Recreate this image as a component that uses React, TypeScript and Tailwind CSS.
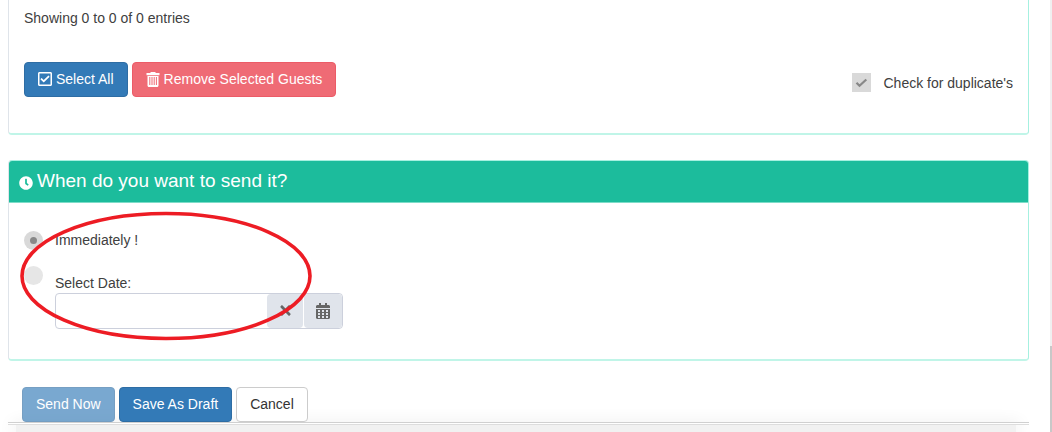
import { useState } from "react";
import type { ReactNode } from "react";
import { FaClock, FaRegCheckSquare, FaTimes } from "react-icons/fa";

interface ButtonProps {
  children: ReactNode;
  variant: "primary" | "danger" | "default";
  disabled?: boolean;
  onClick?: () => void;
}

function Button({ children, variant, disabled = false, onClick }: ButtonProps) {
  const getVariantStyles = () => {
    switch (variant) {
      case "primary":
        return "border-[#2e6da4] bg-[#337ab7] text-white";
      case "danger":
        return "border-[#ec5b67] bg-[#ef6b75] text-white";
      case "default":
        return "border-[#cccccc] bg-white text-[#333333]";
    }
  };

  return (
    <button
      type="button"
      disabled={disabled}
      onClick={onClick}
      className={`flex h-[35px] items-center gap-1 rounded border px-[13px] pb-px whitespace-nowrap disabled:opacity-65 ${getVariantStyles()}`}
    >
      {children}
    </button>
  );
}

function TrashIcon() {
  return (
    <svg viewBox="0 0 14 15" className="h-[15px] w-[14px]" fill="currentColor" aria-hidden="true">
      <path d="M4.500 1V0h5v1H13.500v2.200H.5V1z" />
      <path
        fillRule="evenodd"
        d="M1.500 4h11v9.500c0 .8-.6 1.500-1.500 1.500H3c-.9 0-1.500-.7-1.500-1.500zM3.300 5v8h1V5zM5.500 5v8h1V5zM7.700 5v8h1V5zM9.900 5v8h1V5z"
      />
    </svg>
  );
}

function CalendarIcon() {
  return (
    <svg viewBox="0 0 14 16" className="h-4 w-[14px]" aria-hidden="true">
      <path
        fill="currentColor"
        fillRule="evenodd"
        d="M3 0h2v2h4V0h2v2h1.500c.8 0 1.500.7 1.500 1.500V5H0V3.500C0 2.700.7 2 1.500 2H3zM0 6h14v8.500c0 .8-.7 1.500-1.500 1.500h-11C.7 16 0 15.300 0 14.500zM2 7v2h2V7zM6 7v2h2V7zM10 7v2h2V7zM2 10v2h2v-2zM6 10v2h2v-2zM10 10v2h2v-2zM2 13v2h2v-2zM6 13v2h2v-2zM10 13v2h2v-2z"
      />
    </svg>
  );
}

const radioStyles =
  "flex h-[19px] w-[19px] shrink-0 appearance-none items-center justify-center rounded-full bg-[#e6e6e6] checked:bg-[#d9d9d9] checked:before:h-[7px] checked:before:w-[7px] checked:before:rounded-full checked:before:bg-[#888888]";

export default function App() {
  const [checkDuplicates, setCheckDuplicates] = useState(true);
  const [sendMode, setSendMode] = useState("now");
  const [date, setDate] = useState("");

  return (
    <div className="flex min-h-screen bg-white font-['Liberation_Sans',Arial,sans-serif] text-sm leading-5 text-[#404040]">
      <div className="flex min-w-0 flex-1 flex-col">
        <main className="relative mr-[21px] ml-2 flex flex-col">
          {/* Guest list */}
          <section className="rounded-b border border-t-0 border-[#a6f0e0] border-b-2 border-b-[#c0f5e8] border-l-[#dfe4ea] px-[15px] pt-2 pb-9">
            <p>Showing 0 to 0 of 0 entries</p>
            <div className="mt-[34px] flex items-center justify-between">
              <div className="flex gap-1">
                <Button variant="primary">
                  <FaRegCheckSquare className="h-4 w-[14px]" />
                  Select All
                </Button>
                <Button variant="danger">
                  <TrashIcon />
                  Remove Selected Guests
                </Button>
              </div>
              <label className="flex items-center gap-3 pt-[6px]">
                <span className="relative flex h-[19px] w-[19px]">
                  <input
                    type="checkbox"
                    checked={checkDuplicates}
                    onChange={(e) => setCheckDuplicates(e.target.checked)}
                    className="peer h-full w-full appearance-none bg-[#d9d9d9]"
                  />
                  <svg
                    viewBox="0 0 19 19"
                    className="pointer-events-none invisible absolute inset-0 peer-checked:visible"
                    fill="none"
                    stroke="#888888"
                    strokeWidth="2.200"
                    aria-hidden="true"
                  >
                    <path d="M4.500 9.800l3 3 6.800-6.300" />
                  </svg>
                </span>
                Check for duplicate's
              </label>
            </div>
          </section>

          {/* Schedule */}
          <section className="mt-[25px] rounded border border-[#a6f0e0] border-b-2 border-b-[#c0f5e8] border-l-[#dfe4ea]">
            <h2 className="flex h-[42px] items-center gap-1 rounded-t-[3px] border-b border-[#7edcc8] bg-[#1cbc9c] px-[10px] pb-[2px] text-[19px] text-white">
              <FaClock className="mt-1 h-[14px] w-[14px]" />
              When do you want to send it?
            </h2>
            <div className="flex flex-col px-[15px] pt-[27px] pb-[30px]">
              <label className="flex items-center gap-3">
                <input
                  type="radio"
                  name="send-mode"
                  checked={sendMode === "now"}
                  onChange={() => setSendMode("now")}
                  className={radioStyles}
                />
                Immediately !
              </label>
              <div className="mt-4 flex gap-3">
                <input
                  type="radio"
                  name="send-mode"
                  aria-label="Select Date"
                  checked={sendMode === "date"}
                  onChange={() => setSendMode("date")}
                  className={radioStyles}
                />
                <div className="pt-2">
                  <label htmlFor="send-date" className="block leading-[19px]">
                    Select Date:
                  </label>
                  <div className="flex h-9 w-72 overflow-hidden rounded border border-[#ccd0dc]">
                    <input
                      id="send-date"
                      type="text"
                      value={date}
                      onChange={(e) => setDate(e.target.value)}
                      className="min-w-0 flex-1 px-3 outline-none"
                    />
                    <button
                      type="button"
                      aria-label="Clear date"
                      onClick={() => setDate("")}
                      className="flex w-9 items-center justify-center rounded bg-[#e0e4eb] pb-px text-[#666666]"
                    >
                      <FaTimes className="h-[15px] w-[15px]" />
                    </button>
                    <button
                      type="button"
                      aria-label="Open calendar"
                      className="ml-px flex w-[38px] items-center justify-center rounded bg-[#e0e4eb] pb-px text-[#666666]"
                    >
                      <CalendarIcon />
                    </button>
                  </div>
                </div>
              </div>
            </div>
          </section>

          {/* Hand-drawn highlight round the schedule options */}
          <svg
            viewBox="0 0 292 130"
            className="pointer-events-none absolute bottom-[84px] left-3 h-[130px] w-[292px]"
            fill="none"
            aria-hidden="true"
          >
            <ellipse cx="146" cy="65" rx="144" ry="62.500" stroke="#ed1c24" strokeWidth="3.600" />
          </svg>

          {/* Actions */}
          <div className="mt-[26px] flex gap-1 px-[14px]">
            <Button variant="primary" disabled>
              Send Now
            </Button>
            <Button variant="primary">Save As Draft</Button>
            <Button variant="default">Cancel</Button>
          </div>
          <div className="relative h-[3px] border-y border-[#d0d0d0] border-b-[#dddddd] bg-white" />
        </main>
        <div className="mr-[34px] ml-4 flex-1 bg-[#f1f1f1] shadow-[0_0_16px_4px_rgba(0,0,0,0.06)]" />
      </div>

      {/* Scroll track */}
      <div className="flex w-[2px] flex-col justify-end bg-[#f0f0f0]">
        <div className="h-1/5 bg-[#c8c8c8]" />
      </div>
    </div>
  );
}
